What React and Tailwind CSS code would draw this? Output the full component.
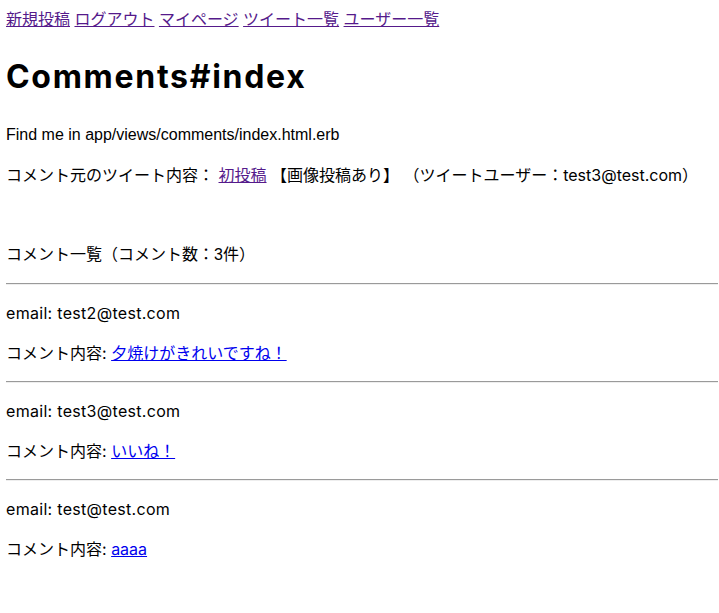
export default function App() {
  const comments = [
    { email: 'test2@test.com', body: '夕焼けがきれいですね！' },
    { email: 'test3@test.com', body: 'いいね！' },
    { email: 'test@test.com', body: 'aaaa' },
  ];
  // Latin in the Japanese-styled lines renders wider, like Hiragino's
  const wide = "font-['Inter','Noto_Sans_CJK_JP',sans-serif]";
  const visited = 'text-[#551a8b] underline';
  const link = 'text-[#0000ee] underline';

  return (
    <div className="font-['Liberation_Sans','Noto_Sans_CJK_JP',sans-serif] bg-white text-black text-base leading-6 pl-[6px] pr-[1px] pt-2 pb-8 min-h-[613px]">
      {/* header nav */}
      <div>
        <a href="#" className={visited}>新規投稿</a>{' '}
        <a href="#" className={visited}>ログアウト</a>{' '}
        <a href="#" className={visited}>マイページ</a>{' '}
        <a href="#" className={visited}>ツイート一覧</a>{' '}
        <a href="#" className={visited}>ユーザー一覧</a>
      </div>

      <h1 className={`${wide} text-[32px] leading-[48px] font-bold tracking-[1.7px] mt-[21.44px] mb-[21.44px]`}>Comments#index</h1>
      <p className="my-4">Find me in app/views/comments/index.html.erb</p>

      <p className={`${wide} my-4`}>
        コメント元のツイート内容： <a href="#" className={visited}>初投稿</a> 【画像投稿あり】 （ツイートユーザー：test3@test.com）
      </p>
      <p className="my-4 h-6"></p>

      <p className="my-4">コメント一覧（コメント数：3件）</p>

      {comments.map((c) => (
        <div key={c.email}>
          <hr className="my-4 border-0 border-t border-t-[#9a9a9a] border-b border-b-[#eeeeee] h-0" />
          <p className={`${wide} my-4 tracking-[0.3px]`}>email: {c.email}</p>
          <p className={`${wide} my-4`}>
            コメント内容: <a href="#" className={link}>{c.body}</a>
          </p>
        </div>
      ))}
    </div>
  );
}
